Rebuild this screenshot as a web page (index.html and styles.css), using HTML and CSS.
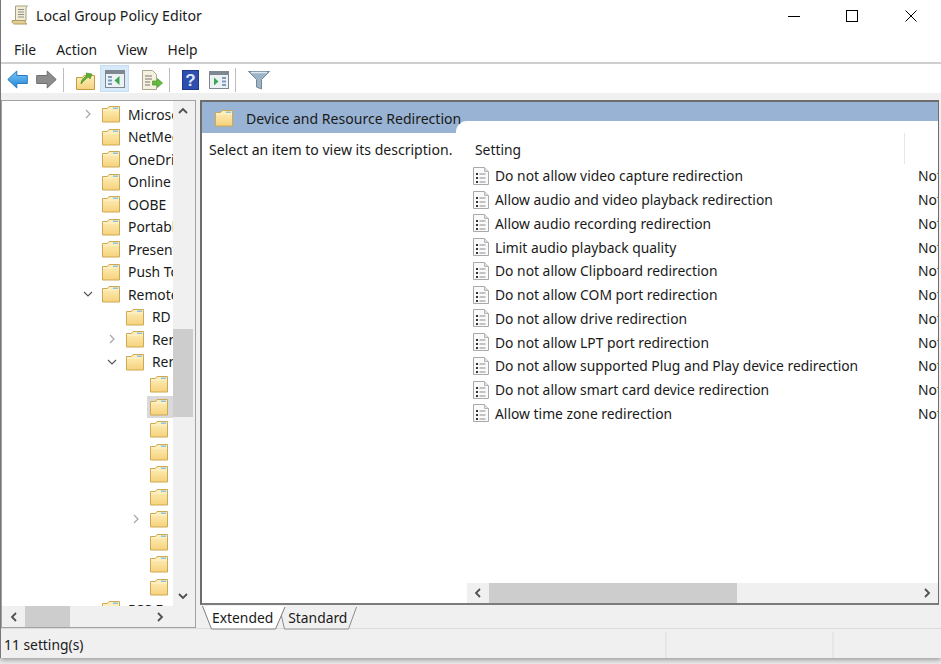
FILE: index.html
```html
<!DOCTYPE html>
<html lang="en">
<head>
  <meta charset="UTF-8" />
  <title>Local Group Policy Editor</title>
  <link rel="stylesheet" href="styles.css">
</head>
<body>
  <svg class="defs" width="0" height="0">
    <defs>
      <linearGradient id="folder-fill" x1="0" y1="0" x2="0" y2="1">
        <stop offset="0" stop-color="#fdf0bd"/>
        <stop offset="1" stop-color="#f6d27c"/>
      </linearGradient>
      <linearGradient id="blue-fill" x1="0" y1="0" x2="0" y2="1">
        <stop offset="0" stop-color="#7cc6f5"/>
        <stop offset="1" stop-color="#1f86d8"/>
      </linearGradient>
      <symbol id="folder" viewBox="0 0 18 18">
        <path d="M.5 3.500h5l1.500 -2h10.500v15.500h-17z" fill="url(#folder-fill)" stroke="#cfa853"/>
        <path d="M1 5h16" stroke="#fff4cf"/>
        <rect x="11" y="2.500" width="5" height="1.500" fill="#8fc3e4"/>
      </symbol>
      <symbol id="policy" viewBox="0 0 16 18">
        <path d="M.5 .5h11l4 4v13h-15z" fill="#fafafa" stroke="#a9a9a9"/>
        <path d="M11.500 .5v4h4" fill="#e4e4e4" stroke="#b5b5b5"/>
        <path d="M3 6h2v2h-2zM3 10h2v2h-2zM3 14h2v2h-2z" fill="#333"/>
        <path d="M6.500 7h6M6.500 11h6M6.500 15h6" stroke="#8a8a8a"/>
      </symbol>
      <symbol id="chev-right" viewBox="0 0 8 10">
        <path d="M2 1l4 4-4 4" fill="none" stroke="currentColor"/>
      </symbol>
      <symbol id="chev-down" viewBox="0 0 10 8">
        <path d="M1 2l4 4 4-4" fill="none" stroke="currentColor"/>
      </symbol>
      <symbol id="chev-left" viewBox="0 0 8 10">
        <path d="M6 1l-4 4 4 4" fill="none" stroke="currentColor"/>
      </symbol>
      <symbol id="chev-up" viewBox="0 0 10 8">
        <path d="M1 6l4-4 4 4" fill="none" stroke="currentColor"/>
      </symbol>
      <symbol id="pane" viewBox="0 0 20 18">
        <rect x=".5" y=".5" width="19" height="17" fill="#eef1f4" stroke="#7f8890"/>
        <rect x="1" y="1" width="18" height="3" fill="#7f8890"/>
      </symbol>
    </defs>
  </svg>

  <div class="window">
    <header class="titlebar">
      <svg class="app-icon" width="18" height="20" viewBox="0 0 18 20">
        <path d="M4.500 1h12c-1.500 1-1.500 2.500-1.500 4v10.500h-10.500z" fill="#f3ecd4" stroke="#a8a080"/>
        <path d="M1 15.500h13c0 2 1 3 2 3.500h-12.500c-1.500 0-2.500-1.500-2.500-3.500z" fill="#e3cf95" stroke="#b09a5f"/>
        <path d="M7 4.500h6M7 7h6M7 9.500h6M7 12h6" stroke="#8d8d8d"/>
      </svg>
      <span class="title">Local Group Policy Editor</span>
      <div class="win-controls">
        <button class="win-btn"><svg width="12" height="12"><path d="M0 6.500h12" stroke="#000"/></svg></button>
        <button class="win-btn"><svg width="12" height="12"><rect x=".5" y=".5" width="11" height="11" fill="none" stroke="#000"/></svg></button>
        <button class="win-btn"><svg width="12" height="12"><path d="M.5 .5l11 11M11.500 .5l-11 11" stroke="#000"/></svg></button>
      </div>
    </header>

    <nav class="menubar">
      <span>File</span>
      <span>Action</span>
      <span>View</span>
      <span>Help</span>
    </nav>

    <div class="toolbar">
      <svg class="tool tool-back" width="21" height="19" viewBox="0 0 21 19">
        <path d="M.8 9.500l9-8.500v4.500h10.500v8h-10.500v4.500z" fill="url(#blue-fill)" stroke="#2a79bd"/>
      </svg>
      <svg class="tool tool-forward" width="21" height="19" viewBox="0 0 21 19">
        <path d="M20.200 9.500l-9-8.500v4.500h-10.500v8h10.500v4.500z" fill="#8c8c8c" stroke="#6e6e6e"/>
      </svg>
      <span class="tool-sep"></span>
      <svg class="tool tool-up" width="19" height="20" viewBox="0 0 19 20">
        <path d="M.5 7.500h6l1.500-2h10.500v14h-18z" fill="url(#folder-fill)" stroke="#c39a45"/>
        <path d="M5 14c0-4 3-7 6-8l-1-3 6 1-2 5-1-2c-3 1-5 4-8 7z" fill="#5fb030" stroke="#3f8a1c" stroke-width=".6"/>
      </svg>
      <span class="tool-active">
        <svg width="20" height="18"><use href="#pane"/>
          <path d="M3 6h4v2h-4zM3 9.500h4v2h-4zM3 13h4v2h-4z" fill="#7a9cc0"/>
          <path d="M14.500 6v9l-5-4.500z" fill="#3aa655"/>
        </svg>
      </span>
      <svg class="tool tool-export" width="21" height="20" viewBox="0 0 21 20">
        <path d="M.5 .5h10l4 4v15h-14z" fill="#f6f1de" stroke="#a9a68f"/>
        <path d="M3 6h7M3 9h7M3 12h5M3 15h5" stroke="#777"/>
        <path d="M20.500 13l-5-4.500v2.500h-5v4h5v2.500z" fill="#62bd3c" stroke="#46982a" stroke-width=".7"/>
      </svg>
      <span class="tool-sep"></span>
      <svg class="tool tool-help" width="17" height="20" viewBox="0 0 17 20">
        <rect x=".5" y=".5" width="16" height="19" fill="#2e4fae" stroke="#1f3a8a"/>
        <text x="8.500" y="16" text-anchor="middle" font-family="Liberation Sans, sans-serif" font-size="17" font-weight="700" fill="#dfe6fa">?</text>
      </svg>
      <svg class="tool tool-action" width="20" height="18"><use href="#pane"/>
        <path d="M5 6.500v8l4.500-4z" fill="#3aa655"/>
        <path d="M13 6h4v2h-4zM13 9.500h4v2h-4zM13 13h4v2h-4z" fill="#7a9cc0"/>
      </svg>
      <span class="tool-sep"></span>
      <svg class="tool tool-filter" width="22" height="20" viewBox="0 0 22 20">
        <path d="M.5 1.500h21l-8 8v9.500l-5-2v-7.500z" fill="#9db4c6" stroke="#6f8799"/>
        <path d="M3 2.500h16" stroke="#dce7ef" stroke-width="1.500"/>
      </svg>
    </div>

    <main class="workspace">
      <aside class="tree-pane">
        <div class="tree-top">
          <ul class="tree">
            <li class="node lvl1"><svg class="twist"><use href="#chev-right"/></svg><svg class="folder"><use href="#folder"/></svg><span>Microsoft</span></li>
            <li class="node lvl1"><span class="twist"></span><svg class="folder"><use href="#folder"/></svg><span>NetMeeting</span></li>
            <li class="node lvl1"><span class="twist"></span><svg class="folder"><use href="#folder"/></svg><span>OneDrive</span></li>
            <li class="node lvl1"><span class="twist"></span><svg class="folder"><use href="#folder"/></svg><span>Online</span></li>
            <li class="node lvl1"><span class="twist"></span><svg class="folder"><use href="#folder"/></svg><span>OOBE</span></li>
            <li class="node lvl1"><span class="twist"></span><svg class="folder"><use href="#folder"/></svg><span>Portable</span></li>
            <li class="node lvl1"><span class="twist"></span><svg class="folder"><use href="#folder"/></svg><span>Presentation</span></li>
            <li class="node lvl1"><span class="twist"></span><svg class="folder"><use href="#folder"/></svg><span>Push To</span></li>
            <li class="node lvl1"><svg class="twist open"><use href="#chev-down"/></svg><svg class="folder"><use href="#folder"/></svg><span>Remote</span></li>
            <li class="node lvl2"><span class="twist"></span><svg class="folder"><use href="#folder"/></svg><span>RD</span></li>
            <li class="node lvl2"><svg class="twist"><use href="#chev-right"/></svg><svg class="folder"><use href="#folder"/></svg><span>Remote</span></li>
            <li class="node lvl2"><svg class="twist open"><use href="#chev-down"/></svg><svg class="folder"><use href="#folder"/></svg><span>Remote</span></li>
            <li class="node lvl3"><span class="twist"></span><svg class="folder"><use href="#folder"/></svg></li>
            <li class="node lvl3 selected"><span class="twist"></span><svg class="folder"><use href="#folder"/></svg></li>
            <li class="node lvl3"><span class="twist"></span><svg class="folder"><use href="#folder"/></svg></li>
            <li class="node lvl3"><span class="twist"></span><svg class="folder"><use href="#folder"/></svg></li>
            <li class="node lvl3"><span class="twist"></span><svg class="folder"><use href="#folder"/></svg></li>
            <li class="node lvl3"><span class="twist"></span><svg class="folder"><use href="#folder"/></svg></li>
            <li class="node lvl3"><svg class="twist"><use href="#chev-right"/></svg><svg class="folder"><use href="#folder"/></svg></li>
            <li class="node lvl3"><span class="twist"></span><svg class="folder"><use href="#folder"/></svg></li>
            <li class="node lvl3"><span class="twist"></span><svg class="folder"><use href="#folder"/></svg></li>
            <li class="node lvl3"><span class="twist"></span><svg class="folder"><use href="#folder"/></svg></li>
            <li class="node lvl1"><span class="twist"></span><svg class="folder"><use href="#folder"/></svg><span>RSS Feeds</span></li>
          </ul>
          <div class="vscroll">
            <svg class="sb-arrow"><use href="#chev-up"/></svg>
            <div class="vthumb"></div>
            <svg class="sb-arrow"><use href="#chev-down"/></svg>
          </div>
        </div>
        <div class="hscroll tree-hscroll">
          <svg class="sb-arrow"><use href="#chev-left"/></svg>
          <div class="hthumb"></div>
          <svg class="sb-arrow"><use href="#chev-right"/></svg>
        </div>
      </aside>

      <section class="content">
        <div class="panel">
          <div class="panel-head">
            <svg class="folder"><use href="#folder"/></svg>
            <span class="panel-title">Device and Resource Redirection</span>
            <span class="panel-notch"></span>
          </div>
          <div class="panel-body">
            <div class="description">Select an item to view its description.</div>
            <div class="settings">
              <div class="col-head"><span>Setting</span></div>
              <ul class="rows">
                <li class="row"><svg class="policy"><use href="#policy"/></svg><span class="row-name">Do not allow video capture redirection</span><span class="row-state">Not configured</span></li>
                <li class="row"><svg class="policy"><use href="#policy"/></svg><span class="row-name">Allow audio and video playback redirection</span><span class="row-state">Not configured</span></li>
                <li class="row"><svg class="policy"><use href="#policy"/></svg><span class="row-name">Allow audio recording redirection</span><span class="row-state">Not configured</span></li>
                <li class="row"><svg class="policy"><use href="#policy"/></svg><span class="row-name">Limit audio playback quality</span><span class="row-state">Not configured</span></li>
                <li class="row"><svg class="policy"><use href="#policy"/></svg><span class="row-name">Do not allow Clipboard redirection</span><span class="row-state">Not configured</span></li>
                <li class="row"><svg class="policy"><use href="#policy"/></svg><span class="row-name">Do not allow COM port redirection</span><span class="row-state">Not configured</span></li>
                <li class="row"><svg class="policy"><use href="#policy"/></svg><span class="row-name">Do not allow drive redirection</span><span class="row-state">Not configured</span></li>
                <li class="row"><svg class="policy"><use href="#policy"/></svg><span class="row-name">Do not allow LPT port redirection</span><span class="row-state">Not configured</span></li>
                <li class="row"><svg class="policy"><use href="#policy"/></svg><span class="row-name">Do not allow supported Plug and Play device redirection</span><span class="row-state">Not configured</span></li>
                <li class="row"><svg class="policy"><use href="#policy"/></svg><span class="row-name">Do not allow smart card device redirection</span><span class="row-state">Not configured</span></li>
                <li class="row"><svg class="policy"><use href="#policy"/></svg><span class="row-name">Allow time zone redirection</span><span class="row-state">Not configured</span></li>
              </ul>
              <div class="hscroll list-hscroll">
                <svg class="sb-arrow"><use href="#chev-left"/></svg>
                <div class="hthumb"></div>
                <svg class="sb-arrow"><use href="#chev-right"/></svg>
              </div>
            </div>
          </div>
        </div>
        <div class="tabs">
          <svg class="tabs-bg" width="170" height="25" viewBox="0 0 170 25">
            <path d="M77.500 2.500l5 21.500h64l8-22" fill="#f0f0f0" stroke="#8c8c8c"/>
            <path d="M.5 1l9 23h64l9.500-23z" fill="#fff"/>
            <path d="M.5 1l9 23h64l9.500-22" fill="none" stroke="#7d7d7d"/>
          </svg>
          <span class="tab">Extended</span>
          <span class="tab">Standard</span>
        </div>
      </section>
    </main>

    <footer class="statusbar">
      <span class="status-main">11 setting(s)</span>
      <span class="status-cell"></span>
      <span class="status-cell"></span>
    </footer>
  </div>
</body>
</html>
```

FILE: styles.css
```css
* {
  box-sizing: border-box;
}

html, body {
  margin: 0;
  height: 664px;
  overflow: hidden;
}

body {
  background: #ececec;
  font-family: "Noto Sans", "Liberation Sans", sans-serif;
  font-size: 13.85px;
  color: #1a1a1a;
}

ul {
  list-style: none;
  margin: 0;
  padding: 0;
}

.defs {
  display: block;
  height: 0;
}

.window {
  height: 658px;
  display: flex;
  flex-direction: column;
  background: #fff;
  border-left: 1px solid #777;
  box-shadow: 0 2px 5px rgba(0,0,0,0.35);
}

/* title + menu */
.titlebar {
  height: 36px;
  display: flex;
  align-items: center;
  padding: 0 1px 4px 10px;
}

.app-icon {
  margin-right: 7px;
  margin-bottom: 2px;
}

.title {
  font-size: 14.2px;
  margin-bottom: 2px;
}

.win-controls {
  margin-left: auto;
  display: flex;
}

.win-btn {
  width: 58.5px;
  height: 32px;
  border: none;
  background: none;
  padding: 0;
  display: flex;
  align-items: center;
  justify-content: center;
}

.menubar {
  height: 28px;
  display: flex;
  align-items: center;
  gap: 20px;
  padding-left: 13px;
  padding-top: 1px;
  border-bottom: 2px solid #cfcfcf;
}

/* toolbar */
.toolbar {
  height: 29px;
  display: flex;
  align-items: center;
  padding: 2px 0 0 6px;
}

.tool {
  flex: none;
}

.tool-forward { margin-left: 8px; }
.tool-up { margin-left: 12px; }
.tool-export { margin-left: 13px; }
.tool-help { margin-left: 12px; }
.tool-action { margin-left: 10px; }
.tool-filter { margin-left: 12px; }

.tool-sep {
  width: 1px;
  height: 24px;
  margin-left: 6px;
  background: #bdbdbd;
}

.tool-active {
  width: 29px;
  height: 27px;
  margin-left: 5px;
  margin-bottom: 2px;
  display: flex;
  align-items: center;
  justify-content: center;
  background: #d8eafa;
  border: 1px solid #c3dff5;
}

/* main area */
.workspace {
  height: 536px;
  padding-top: 7px;
  display: flex;
  background: #f0f0f0;
  border-bottom: 1px solid #dcdcdc;
}

.tree-pane {
  width: 195px;
  height: 528px;
  display: flex;
  flex-direction: column;
  background: #fff;
  border: 1px solid #a2a2a2;
}

.tree-top {
  flex: 1;
  display: flex;
  min-height: 0;
}

.tree {
  width: 171px;
  padding-top: 2px;
  overflow: hidden;
}

.node {
  height: 22.5px;
  display: flex;
  align-items: center;
  white-space: nowrap;
  overflow: hidden;
}

.lvl1 { padding-left: 81px; }
.lvl2 { padding-left: 105px; }
.lvl3 { padding-left: 129px; }

.twist {
  width: 10px;
  height: 10px;
  margin-right: 9px;
  flex: none;
  color: #a6a6a6;
  stroke-width: 1.2;
}

.twist.open {
  color: #555;
}

.folder {
  width: 18px;
  height: 18px;
  flex: none;
}

.node .folder {
  margin-right: 8px;
}

.selected {
  background: linear-gradient(#d9d9d9, #d9d9d9) no-repeat 145px 0 / 26px 100%;
}

.sb-arrow {
  width: 10px;
  height: 10px;
  flex: none;
  stroke-width: 1.8;
}

.vscroll {
  width: 22px;
  display: flex;
  flex-direction: column;
  background: #f0f0f0;
  color: #505050;
}

.vscroll .sb-arrow {
  height: 8px;
  margin: 6px 6px 6px 5px;
}

.vthumb {
  width: 20px;
  height: 88px;
  margin-top: 208px;
  margin-bottom: auto;
  background: #cdcdcd;
}

.hscroll {
  display: flex;
  align-items: center;
  background: #f0f0f0;
  color: #505050;
}

.tree-hscroll {
  height: 21px;
  padding: 0 30px 0 7px;
}

.hthumb {
  background: #cdcdcd;
  height: 100%;
}

.tree-hscroll .hthumb {
  width: 45px;
  margin-left: 6px;
  margin-right: auto;
}

/* right side */
.content {
  flex: 1;
  margin: 0 2px 0 4px;
  display: flex;
  flex-direction: column;
  min-width: 0;
}

.panel {
  height: 505px;
  flex: none;
  display: flex;
  flex-direction: column;
  background: #fff;
  border: 2px solid #6d6d6d;
  border-right-width: 1px;
  border-bottom-color: #7c7c7c;
}

.panel-head {
  height: 31px;
  flex: none;
  position: relative;
  display: flex;
  align-items: center;
  padding-left: 13px;
  background: #98b3d3;
}

.panel-title {
  position: relative;
  z-index: 1;
  margin-left: 13px;
  padding-top: 1px;
  font-size: 14.05px;
}

/* white tab corner cut into the blue band */
.panel-notch {
  position: absolute;
  left: 254px;
  right: 0;
  top: 19px;
  bottom: 0;
  background: #fff;
  border-top-left-radius: 11px;
}

.panel-body {
  flex: 1;
  display: flex;
  min-height: 0;
}

.description {
  width: 265px;
  flex: none;
  padding: 7px 0 0 7px;
  font-size: 14.05px;
}

.settings {
  flex: 1;
  min-width: 0;
  display: flex;
  flex-direction: column;
}

.col-head {
  height: 31px;
  flex: none;
  display: flex;
  align-items: center;
  padding: 1px 0 0 8px;
  margin-right: 33px;
  border-right: 1px solid #e6e6e6;
}

.rows {
  flex: 1;
  overflow: hidden;
}

.row {
  height: 23.75px;
  display: flex;
  align-items: center;
  white-space: nowrap;
  padding-left: 6px;
  overflow: hidden;
}

.policy {
  width: 16px;
  height: 18px;
  flex: none;
  margin-right: 6px;
}

.row-name {
  width: 423px;
  flex: none;
}

.row-state {
  flex: 1;
  min-width: 0;
  overflow: hidden;
}

.list-hscroll {
  height: 20px;
  flex: none;
  padding: 0 6px;
}

.list-hscroll .hthumb {
  width: 248px;
  margin-left: 6px;
  margin-right: auto;
}

.tabs {
  height: 24px;
  position: relative;
  display: flex;
  align-items: center;
  padding-left: 12px;
  padding-top: 2px;
}

.tabs-bg {
  position: absolute;
  left: 2px;
  top: 0;
}

.tab {
  position: relative;
}

.tab + .tab {
  margin-left: 15px;
}

.statusbar {
  height: 29px;
  flex: none;
  display: flex;
  background: #f0f0f0;
  padding-top: 3px;
}

.status-main {
  width: 664px;
  flex: none;
  padding: 3px 0 0 3px;
}

.status-cell {
  width: 167px;
  flex: none;
  border-left: 2px solid #e6e6e6;
}
```
